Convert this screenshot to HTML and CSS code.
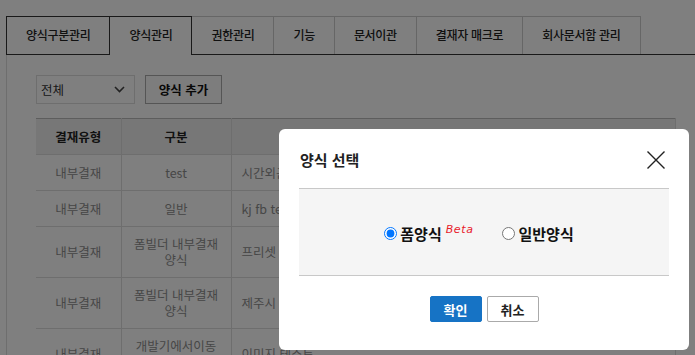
FILE: index.html
```html
<!DOCTYPE html>
<html lang="ko">
<head>
<meta charset="utf-8">
<link rel="stylesheet" href="styles.css">
</head>
<body>
<div class="page">
  <ul class="tabs">
    <li class="tab tab-first">양식구분관리</li>
    <li class="tab tab-active">양식관리</li>
    <li class="tab">권한관리</li>
    <li class="tab">기능</li>
    <li class="tab">문서이관</li>
    <li class="tab">결재자 매크로</li>
    <li class="tab">회사문서함 관리</li>
  </ul>
  <div class="content">
    <div class="toolbar">
      <div class="select"><span>전체</span>
        <svg class="chev" width="11" height="7" viewBox="0 0 11 7"><path d="M1 1 L5.5 5.5 L10 1" fill="none" stroke="#444" stroke-width="1.6"/></svg>
      </div>
      <button class="btn-add">양식 추가</button>
    </div>
    <table class="grid">
      <thead>
        <tr><th class="c1">결재유형</th><th class="c2">구분</th><th class="c3">양식명</th></tr>
      </thead>
      <tbody>
        <tr class="r1"><td>내부결재</td><td>test</td><td class="left">시간외근무 신청서</td></tr>
        <tr class="r1"><td>내부결재</td><td>일반</td><td class="left">kj fb test</td></tr>
        <tr class="r2"><td>내부결재</td><td>폼빌더 내부결재<br>양식</td><td class="left">프리셋 양식</td></tr>
        <tr class="r2"><td>내부결재</td><td>폼빌더 내부결재<br>양식</td><td class="left">제주시 양식</td></tr>
        <tr class="r2"><td>내부결재</td><td>개발기에서이동<br>양식</td><td class="left">이미지 테스트</td></tr>
      </tbody>
    </table>
  </div>
</div>

<div class="overlay"></div>

<div class="modal">
  <div class="modal-head">
    <span class="modal-title">양식 선택</span>
    <svg class="close" width="20" height="20" viewBox="0 0 20 20"><path d="M1.5 1.5 L18.5 18.5 M18.5 1.5 L1.5 18.5" stroke="#222" stroke-width="1.4" fill="none"/></svg>
  </div>
  <div class="modal-body">
    <label class="opt"><input type="radio" name="kind" checked><span class="opt-text">폼양식</span><span class="beta">Beta</span></label>
    <label class="opt"><input type="radio" name="kind"><span class="opt-text">일반양식</span></label>
  </div>
  <div class="modal-foot">
    <button class="btn btn-ok">확인</button>
    <button class="btn btn-cancel">취소</button>
  </div>
</div>
</body>
</html>
```

FILE: styles.css
```css
* { box-sizing: border-box; }
html, body { margin: 0; padding: 0; }
body {
  width: 695px;
  height: 355px;
  overflow: hidden;
  background: #fff;
  font-family: "Noto Sans CJK KR", "Noto Sans", sans-serif;
  color: #333;
}
.page { padding-top: 16px; }
.tabs {
  list-style: none;
  margin: 0 0 0 6px;
  padding: 0;
  display: flex;
  border-bottom: 1px solid #333;
  height: 39px;
}
.tab {
  height: 38px;
  padding: 0 19px;
  font-size: 12px;
  font-weight: 500;
  letter-spacing: -0.3px;
  line-height: 36px;
  color: #222;
  border: 1px solid #ccc;
  border-left: none;
  border-bottom: none;
  background: #fff;
  white-space: nowrap;
}
.tab-first { border: 1px solid #333; border-bottom: none; }
.tab-active {
  border: 1px solid #333;
  border-bottom: none;
  border-left: none;
  height: 39px;
  margin-bottom: -1px;
  background: #fff;
}
.content {
  margin-left: 6px;
  border-left: 1px solid #ddd;
  padding: 20px 0 0 29px;
  height: 300px;
}
.toolbar { display: flex; gap: 10px; height: 29px; }
.select {
  width: 99px;
  height: 29px;
  border: 1px solid #ddd;
  display: flex;
  align-items: center;
  justify-content: space-between;
  padding: 0 9px 0 4px;
  font-size: 12.5px;
  color: #333;
}
.btn-add {
  width: 77px;
  height: 29px;
  border: 1px solid #aaa;
  background: #fafafa;
  font-family: inherit;
  font-size: 12.5px;
  font-weight: bold;
  color: #111;
  padding: 0;
}
.grid {
  margin-top: 14px;
  border-collapse: collapse;
  width: 640px;
  font-size: 12.5px;
  color: #8e8e8e;
}
.grid th {
  background: #efefef;
  height: 36px;
  font-weight: bold;
  color: #222;
  border-top: 1px solid #bbb;
  border-bottom: 1px solid #ddd;
  border-right: 1px solid #ddd;
}
.grid td {
  text-align: center;
  border-bottom: 1px solid #ddd;
  border-right: 1px solid #ddd;
  line-height: 16px;
  padding: 0;
}
.grid td.left { text-align: left; padding-left: 10px; }
.grid .c1 { width: 85px; }
.grid .c2 { width: 110px; }
.r1 { height: 36px; }
.r2 { height: 51px; }

.overlay {
  position: fixed;
  inset: 0;
  background: rgba(0, 0, 0, 0.5);
}
.modal {
  position: fixed;
  left: 279px;
  top: 129px;
  width: 410px;
  height: 221px;
  background: #fff;
  border-radius: 6px;
  padding: 0 20px;
}
.modal-head {
  height: 60px;
  border-bottom: 1px solid #c8c8c8;
  display: flex;
  align-items: center;
  justify-content: space-between;
  padding: 2px 3px 0 1px;
}
.modal-title {
  font-size: 15px;
  font-weight: bold;
  color: #222;
}
.modal-body {
  height: 87px;
  background: #f5f5f5;
  border-bottom: 1px solid #c8c8c8;
  display: flex;
  align-items: center;
  justify-content: center;
  padding-top: 2px;
  padding-right: 10px;
}
.opt { display: flex; align-items: center; cursor: pointer; }
.opt input { margin: 0 3px 0 0; width: 13px; height: 13px; }
.opt-text {
  font-size: 15px;
  font-weight: bold;
  color: #111;
}
.beta {
  font-family: "DejaVu Sans", sans-serif;
  font-style: italic;
  font-size: 11px;
  color: #e8202a;
  margin: -7px 29px 0 4px;
  letter-spacing: 0.6px;
}
.modal-foot {
  display: flex;
  justify-content: center;
  gap: 5px;
  padding-top: 20px;
}
.btn {
  width: 52px;
  height: 26px;
  font-family: inherit;
  font-size: 13px;
  font-weight: bold;
  padding: 0;
  border-radius: 2px;
}
.btn-ok { background: #1673c5; color: #fff; border: 1px solid #1673c5; }
.btn-cancel { background: #fff; color: #222; border: 1px solid #aaa; }
```
